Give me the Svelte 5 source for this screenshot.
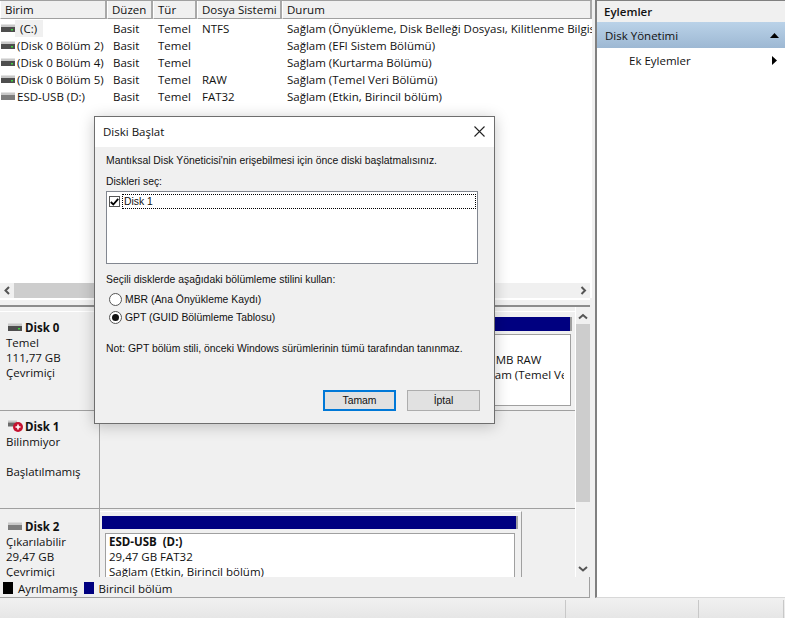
<script>
	const columns = [
		{ label: 'Birim', cls: 'c-name' },
		{ label: 'Düzen', cls: 'c-layout' },
		{ label: 'Tür', cls: 'c-type' },
		{ label: 'Dosya Sistemi', cls: 'c-fs' },
		{ label: 'Durum', cls: 'c-status' }
	];

	const volumes = [
		{ name: '(C:)', fs: 'NTFS', status: 'Sağlam (Önyükleme, Disk Belleği Dosyası, Kilitlenme Bilgisi Dökümü, Birincil bölüm)', usb: false, sel: true },
		{ name: '(Disk 0 Bölüm 2)', fs: '', status: 'Sağlam (EFI Sistem Bölümü)', usb: false },
		{ name: '(Disk 0 Bölüm 4)', fs: '', status: 'Sağlam (Kurtarma Bölümü)', usb: false },
		{ name: '(Disk 0 Bölüm 5)', fs: 'RAW', status: 'Sağlam (Temel Veri Bölümü)', usb: false },
		{ name: 'ESD-USB (D:)', fs: 'FAT32', status: 'Sağlam (Etkin, Birincil bölüm)', usb: true }
	];
</script>

{#snippet driveIcon(usb)}
	<svg class="drive" width="15" height="9" viewBox="0 0 15 9">
		<rect x="0" y="0.5" width="14" height="2.5" fill="#c8c8c8" />
		<rect x="0" y="3" width="14" height="5" fill={usb ? '#7d7d7d' : '#4e4e4e'} />
		{#if !usb}<rect x="10" y="5" width="2" height="1.5" fill="#3fd23f" />{/if}
	</svg>
{/snippet}

<div class="window">
	<div class="main">
		<div class="left">
			<section class="list">
				<div class="thead">
					{#each columns as col}
						<div class="th {col.cls}">{col.label}</div>
					{/each}
				</div>
				<div class="tbody">
					{#each volumes as v}
						<div class="tr">
							<div class="td c-name">
								{@render driveIcon(v.usb)}
								<span class:sel={v.sel}>{v.name}</span>
							</div>
							<div class="td c-layout">Basit</div>
							<div class="td c-type">Temel</div>
							<div class="td c-fs">{v.fs}</div>
							<div class="td c-status">{v.status}</div>
						</div>
					{/each}
				</div>
				<div class="hscroll">
					<svg width="14" height="15" viewBox="0 0 14 15"><path d="M9 4 5.500 7.500 9 11" fill="none" stroke="#555" stroke-width="2" /></svg>
					<div class="hthumb"></div>
					<svg width="14" height="15" viewBox="0 0 14 15"><path d="M5.500 4 9 7.500 5.500 11" fill="none" stroke="#555" stroke-width="2" /></svg>
				</div>
			</section>

			<div class="splitter"></div>

			<section class="graph">
				<div class="disks">
					<div class="disk d0">
						<div class="disk-info">
							<div class="disk-title">{@render driveIcon(false)}<b>Disk 0</b></div>
							<div>Temel</div>
							<div>111,77 GB</div>
							<div>Çevrimiçi</div>
						</div>
						<div class="disk-body">
							<div class="bar bar0"></div>
							<div class="part part0">
								<div class="part-text">
									<div>500 MB RAW</div>
									<div>Sağlam (Temel Veri Bölümü)</div>
								</div>
							</div>
						</div>
					</div>
					<div class="disk d1">
						<div class="disk-info">
							<div class="disk-title">
								<svg class="drive" width="15" height="13" viewBox="0 0 15 13">
									<rect x="0" y="0.5" width="9" height="2" fill="#c8c8c8" />
									<rect x="0" y="2.500" width="9" height="4" fill="#6a6a6a" />
									<circle cx="10" cy="7" r="5" fill="#c4122f" />
									<path d="M10 4.500v5M7.500 7h5" stroke="#fff" stroke-width="1.600" />
								</svg><b>Disk 1</b>
							</div>
							<div>Bilinmiyor</div>
							<div class="blank"></div>
							<div>Başlatılmamış</div>
						</div>
						<div class="disk-body"></div>
					</div>
					<div class="disk d2">
						<div class="disk-info">
							<div class="disk-title">{@render driveIcon(true)}<b>Disk 2</b></div>
							<div>Çıkarılabilir</div>
							<div>29,47 GB</div>
							<div>Çevrimiçi</div>
						</div>
						<div class="disk-body">
							<div class="bar bar2"></div>
							<div class="part part2">
								<b>ESD-USB&nbsp; (D:)</b>
								<div>29,47 GB FAT32</div>
								<div>Sağlam (Etkin, Birincil bölüm)</div>
							</div>
						</div>
					</div>
				</div>
				<div class="vscroll">
					<svg width="14" height="16" viewBox="0 0 14 16"><path d="M3 10.500 7 7 11 10.500" fill="none" stroke="#555" stroke-width="2" /></svg>
					<div class="vthumb"></div>
					<svg width="14" height="16" viewBox="0 0 14 16"><path d="M3 6 7 9.500 11 6" fill="none" stroke="#555" stroke-width="2" /></svg>
				</div>
			</section>

			<div class="legend">
				<span class="swatch black"></span><span>Ayrılmamış</span>
				<span class="swatch navy"></span><span>Birincil bölüm</span>
			</div>
		</div>

		<aside class="actions">
			<div class="act-head">Eylemler</div>
			<div class="act-group">
				<span>Disk Yönetimi</span>
				<svg width="9" height="5" viewBox="0 0 9 5"><path d="M0 5 4.500 0 9 5z" fill="#000" /></svg>
			</div>
			<div class="act-item">
				<span>Ek Eylemler</span>
				<svg width="5" height="9" viewBox="0 0 5 9"><path d="M0 0 5 4.500 0 9z" fill="#000" /></svg>
			</div>
		</aside>
	</div>

	<footer class="statusbar">
		<div class="sb1"></div>
		<div class="sb2"></div>
		<div class="sb3"></div>
	</footer>

	<div class="dialog">
		<div class="dlg-title">
			<span>Diski Başlat</span>
			<svg width="11" height="11" viewBox="0 0 11 11"><path d="M0.500 0.500l10 10M10.500 0.500l-10 10" stroke="#222" stroke-width="1.100" /></svg>
		</div>
		<div class="dlg-body">
			<p class="intro">Mantıksal Disk Yöneticisi'nin erişebilmesi için önce diski başlatmalısınız.</p>
			<p class="pick">Diskleri seç:</p>
			<div class="picker">
				<div class="pick-row">
					<span class="check">
						<svg width="9" height="8" viewBox="0 0 9 8"><path d="M0.800 4 3.300 6.500 8.200 0.800" fill="none" stroke="#000" stroke-width="1.800" /></svg>
					</span>
					<span class="pick-label">Disk 1</span>
				</div>
			</div>
			<p class="style-label">Seçili disklerde aşağıdaki bölümleme stilini kullan:</p>
			<label class="radio"><span class="dot"></span>MBR (Ana Önyükleme Kaydı)</label>
			<label class="radio"><span class="dot on"></span>GPT (GUID Bölümleme Tablosu)</label>
			<p class="note">Not: GPT bölüm stili, önceki Windows sürümlerinin tümü tarafından tanınmaz.</p>
			<div class="buttons">
				<button class="primary">Tamam</button>
				<button>İptal</button>
			</div>
		</div>
	</div>
</div>

<style>
	:global(body) {
		margin: 0;
		background: #f0f0f0;
	}

	.window {
		position: relative;
		width: 785px;
		height: 618px;
		overflow: hidden;
		display: flex;
		flex-direction: column;
		font-family: "Open Sans", "Noto Sans", sans-serif;
		font-size: 11.5px;
		color: #111;
		background: #f0f0f0;
	}

	.main {
		flex: 1;
		display: flex;
		min-height: 0;
		gap: 5px;
	}

	.left {
		width: 590px;
		flex: none;
		display: flex;
		flex-direction: column;
	}

	/* volume list */
	.list {
		height: 298px;
		flex: none;
		display: flex;
		flex-direction: column;
		background: #fff;
		border-top: 1px solid #a0a0a0;
		margin-right: -2px;
		box-sizing: border-box;
	}

	.thead {
		display: flex;
		height: 18px;
		background: #f0f0f0;
		flex: none;
	}

	.th {
		line-height: 18px;
		padding-left: 4px;
		box-sizing: border-box;
		border-right: 2px solid #a8a8a8;
		border-bottom: 1px solid #a0a0a0;
		border-left: 1px solid #fff;
	}

	.c-name { width: 107px; }
	.c-layout { width: 46px; }
	.c-type { width: 44px; }
	.c-fs { width: 85px; }
	.c-status { flex: 1; min-width: 0; }

	.tbody {
		flex: 1;
		padding-top: 1px;
		overflow: hidden;
	}

	.tr {
		display: flex;
		height: 17px;
		line-height: 17px;
	}

	.td {
		white-space: nowrap;
		overflow: hidden;
		box-sizing: border-box;
		padding-left: 6px;
	}

	.td.c-name {
		padding-left: 1px;
		display: flex;
		align-items: center;
		gap: 1px;
	}

	.td.c-type,
	.td.c-fs,
	.td.c-status { padding-left: 5px; }

	.sel {
		background: #f0f0f0;
		margin-left: -2px;
		padding: 0 6px 0 5px;
	}

	.hscroll {
		height: 15px;
		display: flex;
		background: #f0f0f0;
		flex: none;
		margin-right: 2px;
	}

	.hthumb {
		width: 300px;
		background: #cdcdcd;
		margin-right: auto;
	}

	/* disk map */
	.splitter {
		height: 9px;
		flex: none;
		box-sizing: border-box;
		border-top: 2px solid #fff;
		border-bottom: 2px solid #8c8c8c;
		margin-bottom: 0;
	}

	.graph {
		height: 270px;
		flex: none;
		display: flex;
	}

	.disks {
		flex: 1;
		min-width: 0;
		overflow: hidden;
		padding-top: 4px;
	}

	.disk {
		display: flex;
		border-bottom: 1px solid #a0a0a0;
		box-sizing: border-box;
	}

	.d0 { height: 100px; border-top: 1px solid #fff; }
	.d1 { height: 98px; }
	.d2 { height: 68px; border-bottom: 0; overflow: hidden; }

	.disk-info {
		width: 100px;
		flex: none;
		box-sizing: border-box;
		padding: 8px 0 0 6px;
		line-height: 15px;
		border-right: 1px solid #a0a0a0;
		white-space: nowrap;
	}

	.d2 .disk-info { padding-top: 10px; }

	.disk-title {
		display: flex;
		align-items: center;
		margin-left: 2px;
		gap: 2px;
	}

	.blank { height: 15px; }

	.disk-body {
		flex: 1;
		min-width: 0;
		padding-right: 3px;
	}

	.bar {
		height: 14px;
		background: #000080;
		border-right: 2px solid #a0a0a0;
	}

	.bar0 { margin: 5px 0 0 1px; }

	.part {
		background: #fff;
		border: 1px solid #a0a0a0;
		box-sizing: border-box;
		overflow: hidden;
		white-space: nowrap;
		line-height: 15px;
	}

	.part0 {
		height: 72px;
		margin: 3px 1px 0 0;
		padding: 17px 6px 0 372px;
	}

	.part-text { overflow: hidden; }

	.d2 .disk-body {
		padding: 0;
		flex: none;
		width: 422px;
		margin-top: 2px;
		border-top: 1px solid #fff;
		border-right: 1px solid #a0a0a0;
		box-sizing: border-box;
	}

	.bar2 {
		margin: 4px 0 0 2px;
		width: 416px;
		height: 13px;
		box-sizing: border-box;
	}

	.part2 {
		margin: 4px 0 0 5px;
		width: 410px;
		height: 80px;
		padding: 0 0 0 3px;
	}

	.vscroll {
		width: 15px;
		flex: none;
		box-sizing: border-box;
		display: flex;
		flex-direction: column;
		background: #f0f0f0;
		border-left: 1px solid #fff;
		padding-top: 1px;
	}

	.vthumb {
		height: 178px;
		background: #cdcdcd;
		margin-bottom: auto;
	}

	.legend {
		height: 21px;
		flex: none;
		display: flex;
		align-items: center;
		padding: 2px 0 0 3px;
		gap: 5px;
		border-right: 1px solid #a0a0a0;
		border-bottom: 1px solid #a0a0a0;
		box-sizing: border-box;
	}

	.swatch {
		width: 10px;
		height: 12px;
		flex: none;
	}

	.black { background: #000; }
	.navy { background: #000080; margin-left: 1px; }

	/* actions pane */
	.actions {
		flex: 1;
		display: flex;
		flex-direction: column;
		background: #fff;
		border-left: 2px solid #808080;
		border-top: 1px solid #808080;
		border-bottom: 1px solid #d8d8d8;
		box-sizing: border-box;
		margin-bottom: 2px;
	}

	.act-head {
		height: 21px;
		flex: none;
		line-height: 21px;
		padding-left: 7px;
		font-weight: 600;
		background: #f0f0f0;
	}

	.act-group {
		height: 26px;
		flex: none;
		display: flex;
		align-items: center;
		justify-content: space-between;
		padding: 0 6px 0 8px;
		background: linear-gradient(#bad2e8, #9db8d3);
	}

	.act-item {
		height: 24px;
		flex: none;
		display: flex;
		align-items: center;
		justify-content: space-between;
		padding: 0 8px 0 32px;
	}

	.statusbar {
		height: 18px;
		flex: none;
		display: flex;
		background: linear-gradient(#f0f0f0, #e6e6e6);
	}

	.sb1 { width: 566px; box-sizing: border-box; border-right: 1px solid #c8c8c8; }
	.sb2 { width: 133px; box-sizing: border-box; border-right: 1px solid #c8c8c8; }
	.sb3 { flex: 1; margin-right: 1px; border-right: 1px solid #c8c8c8; }

	/* modal */
	.dialog {
		position: absolute;
		left: 94px;
		top: 116px;
		width: 401px;
		height: 308px;
		box-sizing: border-box;
		border: 1px solid #6e6e6e;
		background: #f0f0f0;
		box-shadow: 0 2px 14px rgba(0, 0, 0, 0.22);
		font-family: "Liberation Sans", Arial, sans-serif;
		font-size: 10.4px;
		display: flex;
		flex-direction: column;
	}

	.dlg-title {
		height: 30px;
		flex: none;
		box-sizing: border-box;
		padding: 0 9px 2px 8px;
		display: flex;
		align-items: center;
		justify-content: space-between;
		background: #fff;
		font-family: "Open Sans", sans-serif;
		font-size: 11.5px;
	}

	.dlg-body {
		flex: 1;
		padding: 8px 16px 0 11px;
		display: flex;
		flex-direction: column;
	}

	p { margin: 0; }

	.pick { margin-top: 10px; }

	.picker {
		margin-top: 4px;
		height: 73px;
		background: #fff;
		border: 1px solid #828790;
		box-sizing: border-box;
		padding: 2px 1px 1px;
	}

	.pick-row {
		display: flex;
		align-items: center;
		gap: 2px;
		height: 15px;
		padding-left: 1px;
	}

	.check {
		width: 9px;
		height: 9px;
		border: 1px solid #555;
		display: flex;
		align-items: center;
		justify-content: center;
		flex: none;
	}

	.pick-label {
		flex: 1;
		border: 1px dotted #000;
		line-height: 13px;
		padding-left: 1px;
	}

	.style-label { margin-top: 10px; }

	.radio {
		display: flex;
		align-items: center;
		gap: 3px;
		height: 18px;
		padding-left: 3px;
	}

	.radio:first-of-type { margin-top: 5px; }

	.dot {
		width: 11px;
		height: 11px;
		border-radius: 50%;
		border: 1px solid #555;
		background: #fff;
		position: relative;
		flex: none;
	}

	.dot.on::after {
		content: "";
		position: absolute;
		inset: 2px;
		border-radius: 50%;
		background: #111;
	}

	.note { margin-top: 17px; }

	.buttons {
		margin-top: auto;
		margin-bottom: 12px;
		display: flex;
		justify-content: flex-end;
		gap: 11px;
		margin-right: -2px;
	}

	button {
		width: 73px;
		height: 21px;
		padding: 0;
		border: 1px solid #adadad;
		background: #e1e1e1;
		font: inherit;
		color: #111;
	}

	.primary {
		border: 2px solid #0078d7;
	}
</style>
